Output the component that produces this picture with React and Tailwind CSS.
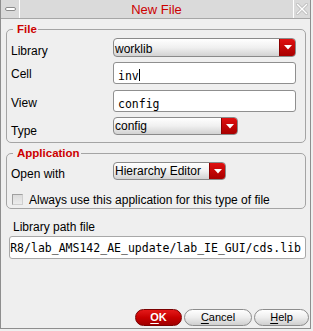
import React from "react";

function Arrow() {
  return (
    <svg width="8" height="5" viewBox="0 0 8 5">
      <polygon points="0,0 8,0 4,4.5" fill="#ffffff" />
    </svg>
  );
}

function Dropdown({ className, textClass, text }) {
  return (
    <div className={`flex overflow-hidden rounded-[4px] border border-[#8a8a8a] bg-linear-to-b from-white via-[#f0f0f0] to-[#d2d2d2] ${className}`}>
      <div className={`flex-1 whitespace-nowrap pl-[1px] text-[12px] leading-[14px] text-black ${textClass}`}>{text}</div>
      <div className="flex w-[16px] items-center justify-center border-l border-[#8a0000] bg-linear-to-b from-[#e01010] to-[#a80000]">
        <Arrow />
      </div>
    </div>
  );
}

export default function App() {
  return (
    <div className="h-[331px] w-[313px] bg-[#efefef] font-['Liberation_Sans',Arial,sans-serif] text-black">
      <div className="flex h-[329px] w-[311px] flex-col border-x border-b border-[#8e8e8e]">
        {/* Title bar */}
        <div className="flex h-[19px] shrink-0 border-b border-[#a6a6a6] bg-[#dadada]">
          <div className="flex w-[19px] items-center justify-center border-r border-white">
            <div className="h-[4px] w-[11px] rounded-[2px] border border-[#8c8c8c] bg-white" />
          </div>
          <div className="flex flex-1 items-center justify-center text-[13px] leading-[15px] text-[#cc0000]">
            New File
          </div>
          <div className="flex w-[17px] items-center justify-center border-l border-white">
            <svg width="12" height="12" viewBox="0 0 12 12">
              <path d="M1.5 1.5 L10.5 10.5 M10.5 1.5 L1.5 10.5" stroke="#c4c4c4" strokeWidth="3.2" strokeLinecap="square" />
              <path d="M1.5 1.5 L10.5 10.5 M10.5 1.5 L1.5 10.5" stroke="#ffffff" strokeWidth="1.2" strokeLinecap="square" />
            </svg>
          </div>
        </div>

        {/* File group */}
        <fieldset className="ml-[5px] mt-[3px] h-[121px] w-[300px] shrink-0 rounded-[5px] border border-[#a4a4a4] p-0">
          <legend className="ml-[6px] pl-[4px] pr-[1px] text-[11.5px] font-bold leading-[14px] text-[#cc0000]">File</legend>
          <div className="mt-[2px] flex">
            <div className="w-[106px] pl-[4px] pt-[6px] text-[12px] leading-[14px]">Library</div>
            <Dropdown className="h-[19px] w-[183px]" textClass="pt-[3px]" text="worklib" />
          </div>
          <div className="mt-[4px] flex">
            <div className="w-[106px] pl-[4px] pt-[5px] text-[12px] leading-[14px]">Cell</div>
            <div className="h-[22px] w-[183px] rounded-[3px] border border-[#8f8f8f] bg-white pl-[4px] pt-[6px] font-['DejaVu_Sans_Mono',monospace] text-[11.5px] leading-[14px]">
              inv<span className="inline-block h-[12px] w-[1px] bg-black align-top" />
            </div>
          </div>
          <div className="mt-[6px] flex">
            <div className="w-[106px] pl-[4px] pt-[6px] text-[12px] leading-[14px]">View</div>
            <div className="h-[22px] w-[183px] rounded-[3px] border border-[#8f8f8f] bg-white pl-[4px] pt-[6px] font-['DejaVu_Sans_Mono',monospace] text-[11.5px] leading-[14px]">
              config
            </div>
          </div>
          <div className="mt-[5px] flex">
            <div className="w-[106px] pl-[4px] pt-[7px] text-[12px] leading-[14px]">Type</div>
            <Dropdown className="h-[18px] w-[125px]" textClass="pt-[1px]" text="config" />
          </div>
        </fieldset>

        {/* Application group */}
        <fieldset className="ml-[5px] mt-[3px] h-[63px] w-[300px] shrink-0 rounded-[5px] border border-[#a4a4a4] p-0">
          <legend className="ml-[6px] pl-[4px] pr-[1px] text-[11.5px] font-bold leading-[14px] text-[#cc0000]">Application</legend>
          <div className="mt-[2px] flex">
            <div className="w-[106px] pl-[4px] pt-[5px] text-[12px] leading-[14px]">Open with</div>
            <Dropdown className="h-[18px] w-[113px]" textClass="pt-[1px]" text="Hierarchy Editor" />
          </div>
          <div className="mt-[12px] flex pl-[5px]">
            <div className="mt-[1px] h-[11px] w-[11px] border border-[#a0a0a0] border-b-[#cfcfcf] border-r-[#cfcfcf] bg-linear-to-b from-[#dcdcdc] to-[#ececec]" />
            <span className="ml-[6px] whitespace-nowrap text-[12px] leading-[14px]">Always use this application for this type of file</span>
          </div>
        </fieldset>

        {/* Library path file */}
        <div className="ml-[12px] mt-[11px] text-[12px] leading-[14px]">Library path file</div>
        <div className="ml-[8px] mt-[2px] flex h-[23px] w-[297px] justify-end overflow-hidden rounded-[3px] border border-[#a8a8a8] bg-white pr-[4px] pt-[4px] font-['DejaVu_Sans_Mono',monospace] text-[11.5px] leading-[14px]">
          <span className="whitespace-nowrap">/home/user/cadence/AMS_IC6R8/lab_AMS142_AE_update/lab_IE_GUI/cds.lib</span>
        </div>

        {/* Buttons */}
        <div className="mt-[50px] flex justify-end gap-[2px] pr-[1px]">
          <div className="flex h-[17px] w-[47px] items-center justify-center rounded-full border border-[#7a0000] bg-linear-to-b from-[#e41818] via-[#c80000] to-[#a00000] text-[11px] font-bold leading-[13px] text-white">
            <span><span className="underline underline-offset-[2px]">O</span>K</span>
          </div>
          <div className="flex h-[17px] w-[68px] items-center justify-center rounded-full border border-[#8c8c8c] bg-linear-to-b from-white via-[#ededed] to-[#cfcfcf] text-[11px] leading-[13px]">
            <span><span className="underline underline-offset-[2px]">C</span>ancel</span>
          </div>
          <div className="flex h-[17px] w-[55px] items-center justify-center rounded-full border border-[#8c8c8c] bg-linear-to-b from-white via-[#ededed] to-[#cfcfcf] text-[11px] leading-[13px]">
            <span><span className="underline underline-offset-[2px]">H</span>elp</span>
          </div>
        </div>
      </div>
    </div>
  );
}
